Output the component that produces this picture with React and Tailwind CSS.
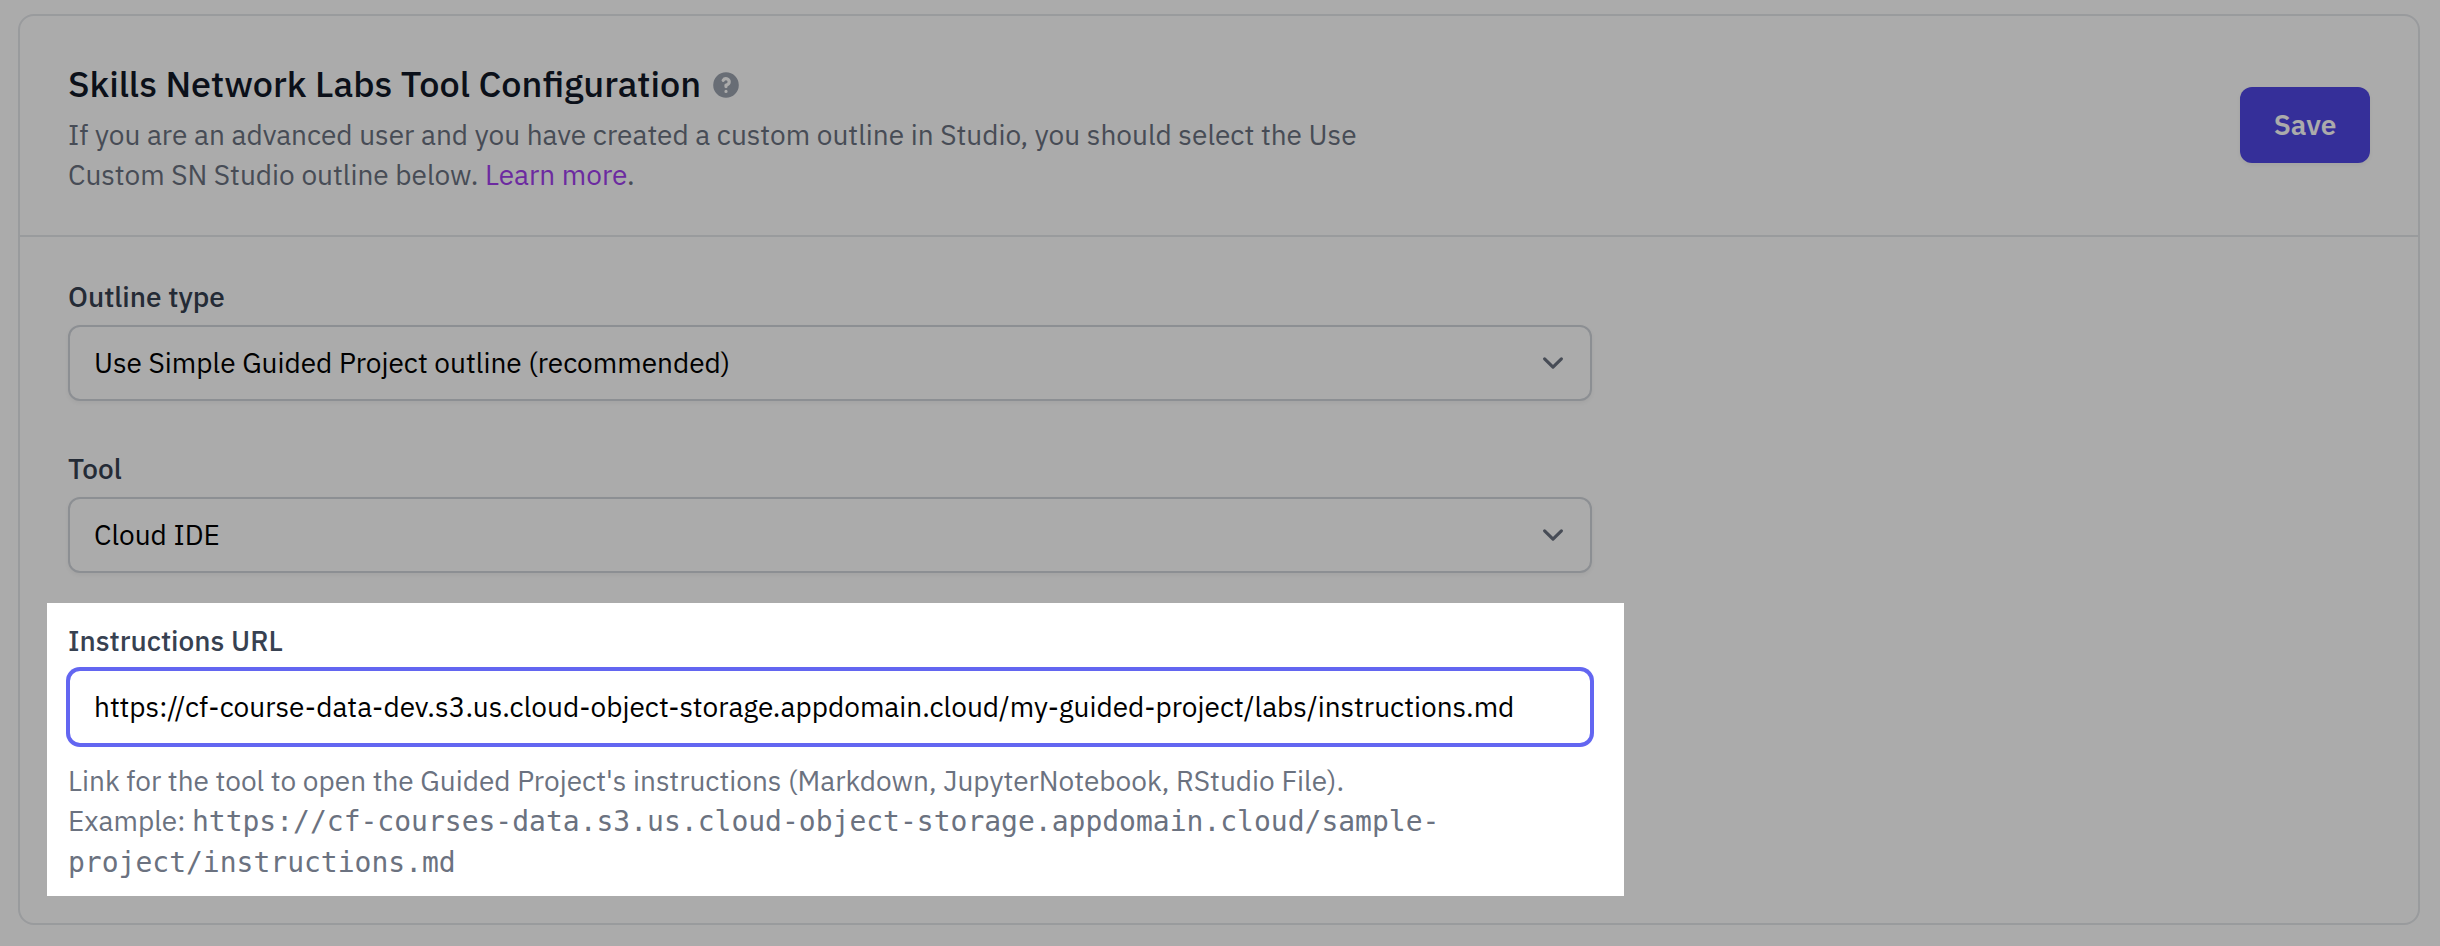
function HelpIcon() {
  return (
    <svg viewBox="0 0 20 20" fill="currentColor" className="mt-0.5 size-8 text-[#9ca3af]" aria-hidden="true">
      <path
        fillRule="evenodd"
        clipRule="evenodd"
        d="M18 10a8 8 0 11-16 0 8 8 0 0116 0zm-8-3a1 1 0 00-.867.5 1 1 0 11-1.731-1A3 3 0 0113 8a3.001 3.001 0 01-2 2.83V11a1 1 0 11-2 0v-1a1 1 0 011-1 1 1 0 100-2zm0 8a1 1 0 100-2 1 1 0 000 2z"
      />
    </svg>
  );
}

function ChevronDown() {
  return (
    <svg viewBox="0 0 20 20" fill="none" className="size-[42px] text-[#6b7280]" aria-hidden="true">
      <path stroke="currentColor" strokeLinecap="round" strokeLinejoin="round" strokeWidth="1.5" d="M6 8l4 4 4-4" />
    </svg>
  );
}

function SelectField({ label, value }) {
  return (
    <div className="flex flex-col gap-2">
      <span className="font-medium text-[#374151]">{label}</span>
      <button
        type="button"
        className="flex h-[76px] items-center justify-between rounded-xl border-2 border-[#d1d5db] bg-white pr-4 pl-6 text-left text-black shadow-[0_2px_4px_0_rgba(0,0,0,0.05)]"
      >
        <span>{value}</span>
        <ChevronDown />
      </button>
    </div>
  );
}

export default function App() {
  return (
    <main className="relative h-[946px] w-[2440px] overflow-hidden bg-white pt-3.5 pr-5 pl-[18px] font-['IBM_Plex_Sans',Roboto,sans-serif] text-[28px] leading-10">
      <section className="h-[911px] rounded-2xl border-2 border-[#e5e7eb] bg-white">
        <header className="flex h-[221px] items-start justify-between border-b-2 border-[#e5e7eb] px-12 pt-11">
          <div className="flex w-[1312px] flex-col gap-[7px]">
            <div className="flex items-center gap-[9px]">
              <h1 className="text-[36px] leading-12 font-medium text-[#111827]">Skills Network Labs Tool Configuration</h1>
              <HelpIcon />
            </div>
            <p className="text-[#6b7280]">
              If you are an advanced user and you have created a custom outline in Studio, you should select the Use
              Custom SN Studio outline below. <a className="text-[#a23fef]">Learn more</a>.
            </p>
          </div>
          <button
            type="button"
            className="mt-[27px] h-[76px] w-[130px] rounded-xl bg-[#4f46e5] font-semibold text-white shadow-[0_2px_4px_0_rgba(0,0,0,0.05)]"
          >
            Save
          </button>
        </header>

        <div className="flex w-[1620px] flex-col gap-12 px-12 pt-10">
          <SelectField label="Outline type" value="Use Simple Guided Project outline (recommended)" />
          <SelectField label="Tool" value="Cloud IDE" />
          <div className="flex flex-col gap-2">
            <label htmlFor="instructions-url" className="font-medium text-[#374151]">
              Instructions URL
            </label>
            <div
              id="instructions-url"
              className="flex h-[76px] items-center rounded-xl border-2 border-[#6366f1] bg-white px-6 text-black ring-2 ring-[#6366f1]"
            >
              https://cf-course-data-dev.s3.us.cloud-object-storage.appdomain.cloud/my-guided-project/labs/instructions.md
            </div>
            <p className="mt-2 text-[#6b7280]">
              Link for the tool to open the Guided Project's instructions (Markdown, JupyterNotebook, RStudio File).
              <br />
              Example:{" "}
              <span className="font-['DejaVu_Sans_Mono',monospace]">
                https://cf-courses-data.s3.us.cloud-object-storage.appdomain.cloud/sample-
                <br />
                project/instructions.md
              </span>
            </p>
          </div>
        </div>
      </section>

      {/* Dimmed backdrop with a spotlight around the URL field */}
      <div className="pointer-events-none absolute top-[603px] left-[47px] h-[293px] w-[1577px] shadow-[0_0_0_3000px_rgba(0,0,0,0.33)]" />
    </main>
  );
}
